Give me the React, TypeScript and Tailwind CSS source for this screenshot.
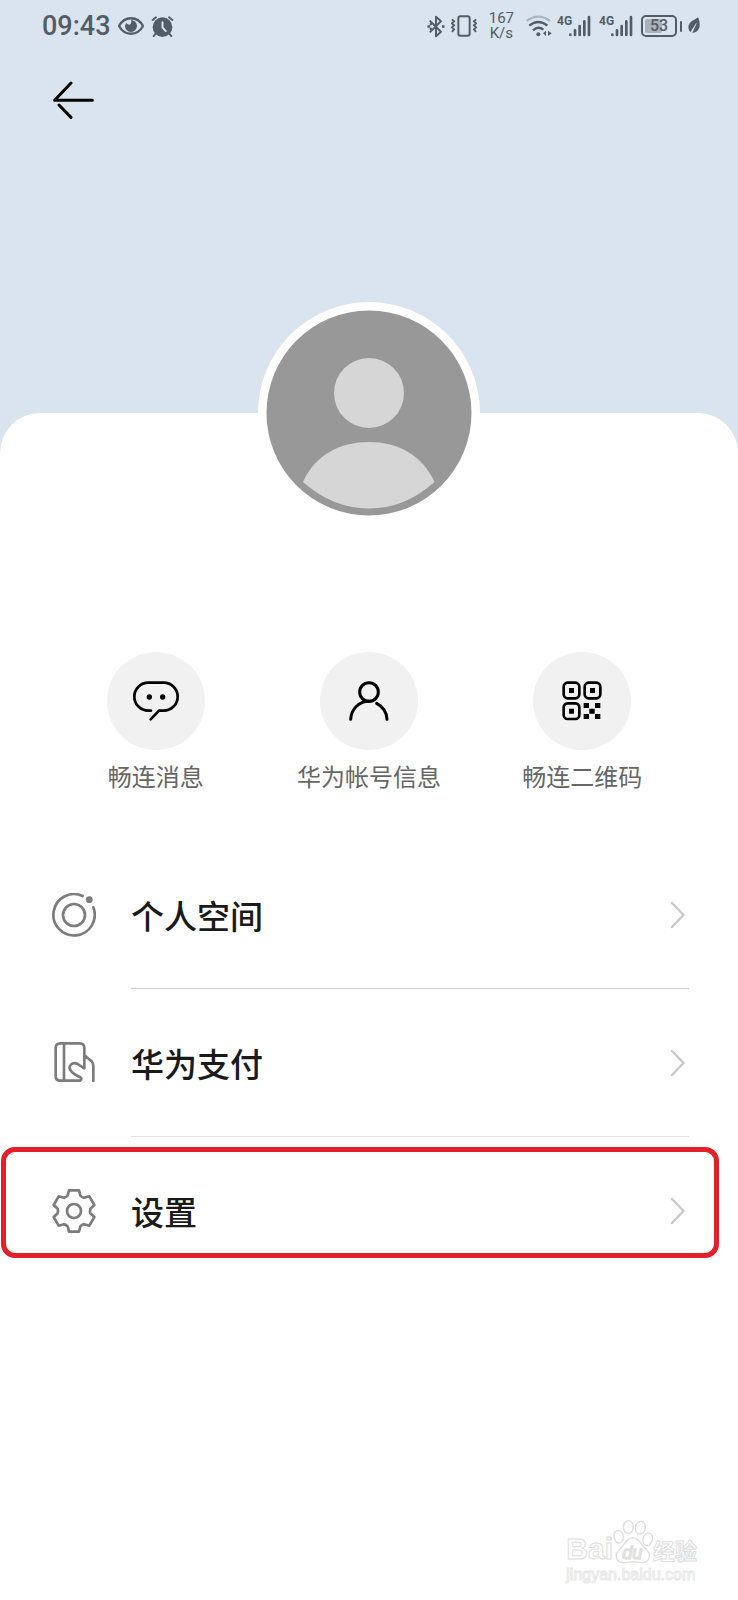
import type { ReactNode } from "react";

const cjk = "font-['Noto_Sans_CJK_SC',sans-serif]";

function EyeIcon() {
  return (
    <svg viewBox="0 0 78 54" className="h-[18px] w-[26px]" fill="none" stroke="currentColor" strokeWidth="7">
      <path d="M3 27C20 -4 58 -4 75 27C58 58 20 58 3 27Z" />
      <path d="M39 9A18 18 0 1 1 21 27Q22 22 25 18Q32 26 38 21Q42 15 39 9Z" fill="currentColor" stroke="none" />
    </svg>
  );
}

function AlarmIcon() {
  return (
    <svg viewBox="0 0 68 64" className="h-[21px] w-[23px]" fill="none" stroke="currentColor" strokeWidth="6" strokeLinecap="round">
      <circle cx="34" cy="34" r="30" fill="currentColor" stroke="none" />
      <path d="M4 12L14 4M64 12L54 4M12 55L7 61M56 55L61 61" />
      <path d="M34 19V35L44 46" stroke="#dae4ee" />
    </svg>
  );
}

function BluetoothIcon() {
  return (
    <svg viewBox="0 0 54 70" className="h-[23px] w-[18px]" fill="none" stroke="currentColor" strokeWidth="6" strokeLinejoin="round">
      <path d="M8 17L42 51L27 65V5L42 19L8 53" />
      <path d="M1 35H9M45 35H53M9 25L14 30M9 45L14 40" strokeWidth="7" />
    </svg>
  );
}

function VibrateIcon() {
  return (
    <svg viewBox="0 0 78 66" className="h-[22px] w-[26px]" fill="none" stroke="currentColor" strokeWidth="6">
      <rect x="22" y="4" width="34" height="58" rx="6" />
      <path d="M3 13L9 19L3 25L9 31L3 37L9 43L3 51M75 13L69 19L75 25L69 31L75 37L69 43L75 51" strokeWidth="6" />
    </svg>
  );
}

function WifiIcon() {
  return (
    <svg viewBox="0 0 78 66" className="h-[22px] w-[26px]" fill="none" stroke="currentColor" strokeWidth="7">
      <path d="M2 18Q37 -8 72 18" opacity=".35" />
      <path d="M10 32Q37 10 64 32M21 46Q37 32 52 44" />
      <circle cx="37" cy="58" r="6" fill="currentColor" stroke="none" />
      <path d="M60 47V63L51 55ZM66 47V63L77 55Z" fill="currentColor" stroke="none" />
    </svg>
  );
}

function Signal() {
  return (
    <div className="flex w-[34px] items-end">
      <span className="w-[12px] self-start font-['Liberation_Sans_Narrow',Roboto,sans-serif] text-[12px] leading-[12px] font-bold">4G</span>
      <svg viewBox="0 0 66 66" className="h-[22px] w-[22px] shrink-0" stroke="currentColor" strokeWidth="8" strokeLinecap="round">
        <path d="M4 59V60M18 46V60M32 33V60M46 19V60M60 6V60" />
      </svg>
    </div>
  );
}

function Battery() {
  return (
    <div className="flex items-center gap-[3px]">
      <div className="relative flex h-[22px] w-[36px] items-center justify-center rounded-[5px] border-2 border-current">
        <span className="absolute top-[2px] bottom-[2px] left-[2px] w-[17px] rounded-[2px] bg-[#a9b1ba]" />
        <span className="relative text-[16px] leading-[18px] font-medium">53</span>
      </div>
      <span className="h-[11px] w-[2px] rounded-full bg-current" />
    </div>
  );
}

function LeafIcon() {
  return (
    <svg viewBox="0 0 36 54" className="h-[18px] w-[12px]" fill="currentColor">
      <path d="M30 1C39 20 38 45 13 48L25 19L7 46C-3 33 1 19 12 12Q24 6 30 1Z" />
      <path d="M25 19L8 52" stroke="#dae4ee" strokeWidth="2" />
    </svg>
  );
}

function StatusBar() {
  return (
    <div className="flex h-[52px] items-center justify-between pr-[38px] pl-[42px] font-[Roboto,sans-serif] text-[#535c66]">
      <div className="flex items-center gap-[7px]">
        <span className="text-[27px] leading-[30px] font-medium">09:43</span>
        <EyeIcon />
        <AlarmIcon />
      </div>
      <div className="flex items-center">
        <BluetoothIcon />
        <span className="ml-[6px] flex"><VibrateIcon /></span>
        <span className="ml-[12px] flex flex-col text-center text-[15px] leading-[15px]">
          <span>167</span>
          <span>K/s</span>
        </span>
        <span className="ml-[12px] flex"><WifiIcon /></span>
        <span className="ml-[5px] flex"><Signal /></span>
        <span className="ml-[8px] flex"><Signal /></span>
        <span className="ml-[8px] flex"><Battery /></span>
        <span className="ml-[6px] flex"><LeafIcon /></span>
      </div>
    </div>
  );
}

function Avatar() {
  return (
    <svg viewBox="0 0 222 222" className="size-[222px]" role="img" aria-label="头像">
      <circle cx="111" cy="111" r="111" fill="#fff" />
      <circle cx="111" cy="111" r="102.5" fill="#989898" />
      <circle cx="111" cy="91" r="35" fill="#d6d6d6" />
      <path d="M45 180C57 153 82 140 111 140S164 153 176.500 180Q147 206.500 111 206.500T45 180Z" fill="#d6d6d6" />
    </svg>
  );
}

function ChatIcon() {
  return (
    <svg viewBox="0 0 138 120" className="h-[40px] w-[46px]" fill="none" stroke="#000" strokeWidth="8" strokeLinecap="round" strokeLinejoin="round">
      <path d="M54 89H46A41 41 0 0 1 46 5H92A42 42 0 0 1 92 89H78L53 115" />
      <circle cx="49" cy="48" r="8" fill="#000" stroke="none" />
      <circle cx="89" cy="48" r="8" fill="#000" stroke="none" />
    </svg>
  );
}

function PersonIcon() {
  return (
    <svg viewBox="0 0 120 120" className="size-[40px]" fill="none" stroke="#000" strokeWidth="9" strokeLinecap="round">
      <circle cx="60" cy="33" r="28" />
      <path d="M5 115C7 84 29 61 60 61M83 67C102 77 113 94 114 115" />
    </svg>
  );
}

function QrIcon() {
  return (
    <svg viewBox="0 0 120 120" className="size-[40px]" fill="none" stroke="#000" strokeWidth="8">
      <rect x="5" y="5" width="47" height="47" rx="12" />
      <rect x="68" y="5" width="47" height="47" rx="12" />
      <rect x="5" y="67" width="47" height="47" rx="12" />
      <path d="M21 21h15v15h-15zM84 21h15v15h-15zM21 83h15v15h-15zM65 66h16v15h-16zM99 66h16v15h-16zM82 83h16v15h-16zM65 99h16v15h-16zM99 99h16v15h-16z" fill="#000" stroke="none" />
    </svg>
  );
}

function OrbitIcon() {
  return (
    <svg viewBox="0 0 132 132" className="size-[44px]" fill="none" stroke="#7c7c7c" strokeWidth="8" strokeLinecap="round">
      <path d="M92 9A62 62 0 1 0 124 43" />
      <circle cx="66" cy="66" r="33" />
      <circle cx="112" cy="20" r="10" fill="#7c7c7c" stroke="none" />
    </svg>
  );
}

function PayIcon() {
  return (
    <svg viewBox="0 0 132 132" className="size-[44px]" fill="none" stroke="#7c7c7c" strokeWidth="8" strokeLinecap="round" strokeLinejoin="round">
      <path d="M97 82L77 69C61 60 46 76 57 90Q66 101 85 109Q91 113 85 119H25Q11 119 11 105V21Q11 7 25 7H83Q97 7 97 21V81M36 7V119M99 44L119 61Q124 66 124 74V120" />
    </svg>
  );
}

function GearIcon() {
  return (
    <svg viewBox="-66 -66 132 132" className="size-[44px]" fill="none" stroke="#7c7c7c" strokeWidth="8" strokeLinejoin="round">
      <path d="M-15 -62H15L19 -46Q24 -41 30 -39.500L46 -44L61 -18L49 -6.500Q47 0 49 6.500L61 18L46 44L30 39.500Q24 41 19 46L15 62H-15L-19 46Q-24 41 -30 39.500L-46 44L-61 18L-49 6.500Q-47 0 -49 -6.500L-61 -18L-46 -44L-30 -39.500Q-24 -41 -19 -46Z" />
      <circle r="21" />
    </svg>
  );
}

function Action({ icon, label }: { icon: ReactNode; label: string }) {
  return (
    <button type="button" className="flex flex-col items-center gap-[8px]">
      <span className="flex size-[98px] items-center justify-center rounded-full bg-[#f1f1f1]">{icon}</span>
      <span className="text-[24px] leading-[36px] whitespace-nowrap text-[#666]">{label}</span>
    </button>
  );
}

function Row({ icon, label, divider, marked }: { icon: ReactNode; label: string; divider?: string; marked?: boolean }) {
  return (
    <li className="relative">
      <a href="#" className="flex h-[148px] items-center gap-[35px] pr-[49px] pl-[52px]">
        <span className="flex shrink-0">{icon}</span>
        <span className={`flex h-full flex-1 items-center justify-between ${divider ?? ""}`}>
          <span className="text-[33px] leading-[48px] font-medium text-[#1a1a1a]">{label}</span>
          <svg viewBox="0 0 15 28" className="mr-[4px] h-[28px] w-[15px]" fill="none" stroke="#c9c9c9" strokeWidth="2.500" strokeLinecap="round" strokeLinejoin="round">
            <path d="M2 2L13.500 14L2 26" />
          </svg>
        </span>
      </a>
      {marked && (
        <span className="pointer-events-none absolute top-[10px] right-[19px] left-px h-[111px] rounded-[14px] border-[5px] border-[#e3202a]" />
      )}
    </li>
  );
}

function Watermark() {
  const outline = "text-white [-webkit-text-stroke:1px_#dedede]";
  return (
    <div className="mt-auto mr-[41px] mb-[14px] flex flex-col self-end font-['Liberation_Sans',sans-serif]">
      <div className="flex items-end">
        <span className={`text-[30px] leading-[30px] font-bold ${outline}`}>Bai</span>
        <svg viewBox="0 0 120 132" className="h-[44px] w-[40px]" fill="#fff" stroke="#dedede" strokeWidth="4">
          <ellipse cx="46" cy="21" rx="15" ry="19" />
          <ellipse cx="82" cy="23" rx="15" ry="19" transform="rotate(10 82 23)" />
          <ellipse cx="17" cy="50" rx="14" ry="19" transform="rotate(-10 17 50)" />
          <ellipse cx="104" cy="58" rx="14" ry="19" transform="rotate(15 104 58)" />
          <path d="M59 53C79 53 84 77 101 89C119 107 105 129 88 128Q60 123 33 128C11 130 2 106 18 90C34 77 39 54 59 53Z" />
          <text x="58" y="116" textAnchor="middle" fontSize="54" fontStyle="italic">du</text>
        </svg>
        <span className={`text-[22px] leading-[30px] font-bold ${outline} ${cjk}`}>经验</span>
      </div>
      <span className="text-[16px] leading-[22px] text-white [-webkit-text-stroke:1px_#e8e8e8]">jingyan.baidu.com</span>
    </div>
  );
}

export default function App() {
  return (
    <div className={`flex min-h-screen flex-col bg-[#dae4ee] ${cjk}`}>
      <header className="h-[413px]">
        <StatusBar />
        <button type="button" aria-label="返回" className="mt-[28px] ml-[53px] flex">
          <svg viewBox="0 0 123 120" className="h-[40px] w-[41px]" fill="none" stroke="#000" strokeWidth="9" strokeLinecap="round" strokeLinejoin="round">
            <path d="M54 9L5 61H118M18 75L54 112" />
          </svg>
        </button>
      </header>
      <main className="flex flex-1 flex-col rounded-t-[40px] bg-white">
        <div className="-mt-[111px] flex justify-center">
          <Avatar />
        </div>
        <div className="mt-[128px] grid grid-cols-3 px-[49px]">
          <Action icon={<ChatIcon />} label="畅连消息" />
          <Action icon={<PersonIcon />} label="华为帐号信息" />
          <Action icon={<QrIcon />} label="畅连二维码" />
        </div>
        <ul className="mt-[47px]">
          <Row icon={<OrbitIcon />} label="个人空间" divider="border-b border-[#cfcfcf]" />
          <Row icon={<PayIcon />} label="华为支付" divider="border-b border-[#e4e4e4]" />
          <Row icon={<GearIcon />} label="设置" marked />
        </ul>
        <Watermark />
      </main>
    </div>
  );
}
